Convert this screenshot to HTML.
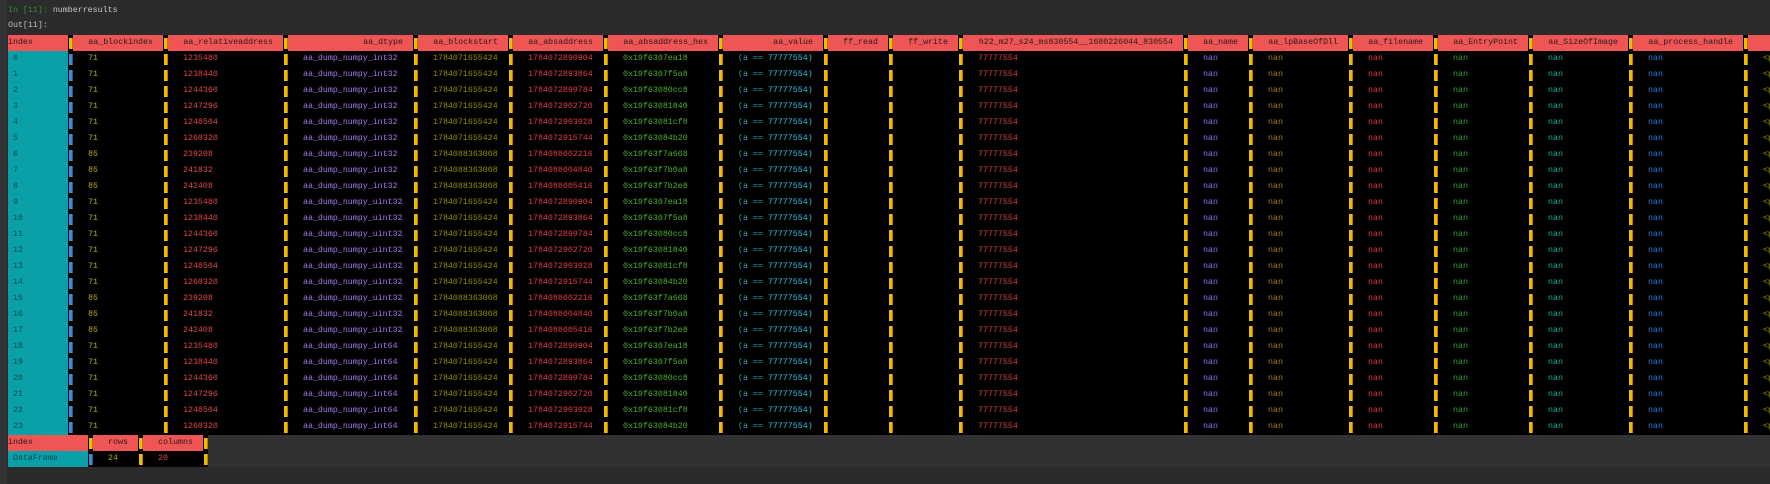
<!DOCTYPE html>
<html><head><meta charset="utf-8"><style>
*{margin:0;padding:0;box-sizing:border-box}
body{width:1770px;height:484px;background:#2b2b2b;overflow:hidden;position:relative;font-family:"Liberation Mono","DejaVu Sans Mono",monospace;font-size:8.3px}
#gut{position:absolute;left:0;top:0;width:7px;height:484px;background:#313335}
.ln{position:absolute;left:8px;white-space:pre;line-height:10px}
table{position:absolute;border-collapse:collapse;table-layout:fixed;background:#000}
td{height:16px;padding:0 0 0 15px;white-space:nowrap;overflow:hidden;line-height:16px}
tr.h td{background:#f05555;color:#2a1a1a;text-align:right;padding:0 10px 0 0}
tr.h td.i{text-align:left;padding:0}
td.i{background:#0aa0a8;color:#0a4a4a;padding-left:5px}
td.s{padding:0;background:#000 linear-gradient(to right,#000 1px,#e6c000 1px,#e6c000 4px,#d07000 4px,#d07000 5px,#000 5px) no-repeat 0 3px/100% 11px}
tr.h td.s{background:#000 linear-gradient(to right,#000 1px,#e6c000 1px,#e6c000 4px,#d07000 4px,#d07000 5px,#000 5px) no-repeat 0 3px/100% 11px;padding:0}
td.b{padding:0;background:#000 linear-gradient(to right,#000 1px,#3a8ed0 1px,#3a8ed0 4px,#1a5e90 4px,#1a5e90 5px,#000 5px) no-repeat 0 3px/100% 11px}
.c1{color:#b8a810}.c2{color:#e04848}.c3{color:#a878f0}.c4{color:#909000}.c5{color:#e03c48}.c6{color:#50b030}
.c7{color:#2aa8c0}.c7 b{font-weight:normal;color:#30c0e0}.c8{color:#d84040}
.n1{color:#8878ff}.n2{color:#a08010}.n3{color:#e03848}.n4{color:#30a030}.n5{color:#10b0a0}.n6{color:#2080e0}.n7{color:#a0a000}
#ft{position:absolute;left:208px;top:435px;width:1562px;height:32px;background:#313131}
</style></head><body>
<div id="gut"></div>
<div class="ln" style="top:6px"><span style="color:#3c8c3c">In [11]:</span> <span style="color:#c8c8c8">numberresults</span></div>
<div class="ln" style="top:21px;color:#c0c0c0">Out[11]:</div>
<table style="left:8px;top:35px;width:1770px">
<colgroup><col style="width:60px"><col style="width:5px"><col style="width:90px"><col style="width:5px"><col style="width:115px"><col style="width:5px"><col style="width:125px"><col style="width:5px"><col style="width:90px"><col style="width:5px"><col style="width:90px"><col style="width:5px"><col style="width:110px"><col style="width:5px"><col style="width:100px"><col style="width:5px"><col style="width:60px"><col style="width:5px"><col style="width:65px"><col style="width:5px"><col style="width:220px"><col style="width:5px"><col style="width:60px"><col style="width:5px"><col style="width:95px"><col style="width:5px"><col style="width:80px"><col style="width:5px"><col style="width:90px"><col style="width:5px"><col style="width:95px"><col style="width:5px"><col style="width:110px"><col style="width:5px"><col style="width:30px"></colgroup>
<tr class="h"><td class="i">index<td class="s"><td>aa_blockindex<td class="s"><td>aa_relativeaddress<td class="s"><td>aa_dtype<td class="s"><td>aa_blockstart<td class="s"><td>aa_absaddress<td class="s"><td>aa_absaddress_hex<td class="s"><td>aa_value<td class="s"><td>ff_read<td class="s"><td>ff_write<td class="s"><td>h22_m27_s24_ms830554__1680226044_830554<td class="s"><td>aa_name<td class="s"><td>aa_lpBaseOfDll<td class="s"><td>aa_filename<td class="s"><td>aa_EntryPoint<td class="s"><td>aa_SizeOfImage<td class="s"><td>aa_process_handle<td class="s"><td></td></tr>
<tr><td class="i">0<td class="b"><td class="c1">71<td class="s"><td class="c2">1235480<td class="s"><td class="c3">aa_dump_numpy_int32<td class="s"><td class="c4">1784071655424<td class="s"><td class="c5">1784072890904<td class="s"><td class="c6">0x19f6307ea18<td class="s"><td class="c7">(a == <b>77777554)</b><td class="s"><td><td class="s"><td><td class="s"><td class="c8">77777554<td class="s"><td class="n1">nan<td class="s"><td class="n2">nan<td class="s"><td class="n3">nan<td class="s"><td class="n4">nan<td class="s"><td class="n5">nan<td class="s"><td class="n6">nan<td class="s"><td class="n7">&lt;pandas</td></tr>
<tr><td class="i">1<td class="b"><td class="c1">71<td class="s"><td class="c2">1238440<td class="s"><td class="c3">aa_dump_numpy_int32<td class="s"><td class="c4">1784071655424<td class="s"><td class="c5">1784072893864<td class="s"><td class="c6">0x19f6307f5a8<td class="s"><td class="c7">(a == <b>77777554)</b><td class="s"><td><td class="s"><td><td class="s"><td class="c8">77777554<td class="s"><td class="n1">nan<td class="s"><td class="n2">nan<td class="s"><td class="n3">nan<td class="s"><td class="n4">nan<td class="s"><td class="n5">nan<td class="s"><td class="n6">nan<td class="s"><td class="n7">&lt;pandas</td></tr>
<tr><td class="i">2<td class="b"><td class="c1">71<td class="s"><td class="c2">1244360<td class="s"><td class="c3">aa_dump_numpy_int32<td class="s"><td class="c4">1784071655424<td class="s"><td class="c5">1784072899784<td class="s"><td class="c6">0x19f63080cc8<td class="s"><td class="c7">(a == <b>77777554)</b><td class="s"><td><td class="s"><td><td class="s"><td class="c8">77777554<td class="s"><td class="n1">nan<td class="s"><td class="n2">nan<td class="s"><td class="n3">nan<td class="s"><td class="n4">nan<td class="s"><td class="n5">nan<td class="s"><td class="n6">nan<td class="s"><td class="n7">&lt;pandas</td></tr>
<tr><td class="i">3<td class="b"><td class="c1">71<td class="s"><td class="c2">1247296<td class="s"><td class="c3">aa_dump_numpy_int32<td class="s"><td class="c4">1784071655424<td class="s"><td class="c5">1784072902720<td class="s"><td class="c6">0x19f63081840<td class="s"><td class="c7">(a == <b>77777554)</b><td class="s"><td><td class="s"><td><td class="s"><td class="c8">77777554<td class="s"><td class="n1">nan<td class="s"><td class="n2">nan<td class="s"><td class="n3">nan<td class="s"><td class="n4">nan<td class="s"><td class="n5">nan<td class="s"><td class="n6">nan<td class="s"><td class="n7">&lt;pandas</td></tr>
<tr><td class="i">4<td class="b"><td class="c1">71<td class="s"><td class="c2">1248504<td class="s"><td class="c3">aa_dump_numpy_int32<td class="s"><td class="c4">1784071655424<td class="s"><td class="c5">1784072903928<td class="s"><td class="c6">0x19f63081cf8<td class="s"><td class="c7">(a == <b>77777554)</b><td class="s"><td><td class="s"><td><td class="s"><td class="c8">77777554<td class="s"><td class="n1">nan<td class="s"><td class="n2">nan<td class="s"><td class="n3">nan<td class="s"><td class="n4">nan<td class="s"><td class="n5">nan<td class="s"><td class="n6">nan<td class="s"><td class="n7">&lt;pandas</td></tr>
<tr><td class="i">5<td class="b"><td class="c1">71<td class="s"><td class="c2">1260320<td class="s"><td class="c3">aa_dump_numpy_int32<td class="s"><td class="c4">1784071655424<td class="s"><td class="c5">1784072915744<td class="s"><td class="c6">0x19f63084b20<td class="s"><td class="c7">(a == <b>77777554)</b><td class="s"><td><td class="s"><td><td class="s"><td class="c8">77777554<td class="s"><td class="n1">nan<td class="s"><td class="n2">nan<td class="s"><td class="n3">nan<td class="s"><td class="n4">nan<td class="s"><td class="n5">nan<td class="s"><td class="n6">nan<td class="s"><td class="n7">&lt;pandas</td></tr>
<tr><td class="i">6<td class="b"><td class="c1">85<td class="s"><td class="c2">239208<td class="s"><td class="c3">aa_dump_numpy_int32<td class="s"><td class="c4">1784088363008<td class="s"><td class="c5">1784088602216<td class="s"><td class="c6">0x19f63f7a668<td class="s"><td class="c7">(a == <b>77777554)</b><td class="s"><td><td class="s"><td><td class="s"><td class="c8">77777554<td class="s"><td class="n1">nan<td class="s"><td class="n2">nan<td class="s"><td class="n3">nan<td class="s"><td class="n4">nan<td class="s"><td class="n5">nan<td class="s"><td class="n6">nan<td class="s"><td class="n7">&lt;pandas</td></tr>
<tr><td class="i">7<td class="b"><td class="c1">85<td class="s"><td class="c2">241832<td class="s"><td class="c3">aa_dump_numpy_int32<td class="s"><td class="c4">1784088363008<td class="s"><td class="c5">1784088604840<td class="s"><td class="c6">0x19f63f7b0a8<td class="s"><td class="c7">(a == <b>77777554)</b><td class="s"><td><td class="s"><td><td class="s"><td class="c8">77777554<td class="s"><td class="n1">nan<td class="s"><td class="n2">nan<td class="s"><td class="n3">nan<td class="s"><td class="n4">nan<td class="s"><td class="n5">nan<td class="s"><td class="n6">nan<td class="s"><td class="n7">&lt;pandas</td></tr>
<tr><td class="i">8<td class="b"><td class="c1">85<td class="s"><td class="c2">242408<td class="s"><td class="c3">aa_dump_numpy_int32<td class="s"><td class="c4">1784088363008<td class="s"><td class="c5">1784088605416<td class="s"><td class="c6">0x19f63f7b2e8<td class="s"><td class="c7">(a == <b>77777554)</b><td class="s"><td><td class="s"><td><td class="s"><td class="c8">77777554<td class="s"><td class="n1">nan<td class="s"><td class="n2">nan<td class="s"><td class="n3">nan<td class="s"><td class="n4">nan<td class="s"><td class="n5">nan<td class="s"><td class="n6">nan<td class="s"><td class="n7">&lt;pandas</td></tr>
<tr><td class="i">9<td class="b"><td class="c1">71<td class="s"><td class="c2">1235480<td class="s"><td class="c3">aa_dump_numpy_uint32<td class="s"><td class="c4">1784071655424<td class="s"><td class="c5">1784072890904<td class="s"><td class="c6">0x19f6307ea18<td class="s"><td class="c7">(a == <b>77777554)</b><td class="s"><td><td class="s"><td><td class="s"><td class="c8">77777554<td class="s"><td class="n1">nan<td class="s"><td class="n2">nan<td class="s"><td class="n3">nan<td class="s"><td class="n4">nan<td class="s"><td class="n5">nan<td class="s"><td class="n6">nan<td class="s"><td class="n7">&lt;pandas</td></tr>
<tr><td class="i">10<td class="b"><td class="c1">71<td class="s"><td class="c2">1238440<td class="s"><td class="c3">aa_dump_numpy_uint32<td class="s"><td class="c4">1784071655424<td class="s"><td class="c5">1784072893864<td class="s"><td class="c6">0x19f6307f5a8<td class="s"><td class="c7">(a == <b>77777554)</b><td class="s"><td><td class="s"><td><td class="s"><td class="c8">77777554<td class="s"><td class="n1">nan<td class="s"><td class="n2">nan<td class="s"><td class="n3">nan<td class="s"><td class="n4">nan<td class="s"><td class="n5">nan<td class="s"><td class="n6">nan<td class="s"><td class="n7">&lt;pandas</td></tr>
<tr><td class="i">11<td class="b"><td class="c1">71<td class="s"><td class="c2">1244360<td class="s"><td class="c3">aa_dump_numpy_uint32<td class="s"><td class="c4">1784071655424<td class="s"><td class="c5">1784072899784<td class="s"><td class="c6">0x19f63080cc8<td class="s"><td class="c7">(a == <b>77777554)</b><td class="s"><td><td class="s"><td><td class="s"><td class="c8">77777554<td class="s"><td class="n1">nan<td class="s"><td class="n2">nan<td class="s"><td class="n3">nan<td class="s"><td class="n4">nan<td class="s"><td class="n5">nan<td class="s"><td class="n6">nan<td class="s"><td class="n7">&lt;pandas</td></tr>
<tr><td class="i">12<td class="b"><td class="c1">71<td class="s"><td class="c2">1247296<td class="s"><td class="c3">aa_dump_numpy_uint32<td class="s"><td class="c4">1784071655424<td class="s"><td class="c5">1784072902720<td class="s"><td class="c6">0x19f63081840<td class="s"><td class="c7">(a == <b>77777554)</b><td class="s"><td><td class="s"><td><td class="s"><td class="c8">77777554<td class="s"><td class="n1">nan<td class="s"><td class="n2">nan<td class="s"><td class="n3">nan<td class="s"><td class="n4">nan<td class="s"><td class="n5">nan<td class="s"><td class="n6">nan<td class="s"><td class="n7">&lt;pandas</td></tr>
<tr><td class="i">13<td class="b"><td class="c1">71<td class="s"><td class="c2">1248504<td class="s"><td class="c3">aa_dump_numpy_uint32<td class="s"><td class="c4">1784071655424<td class="s"><td class="c5">1784072903928<td class="s"><td class="c6">0x19f63081cf8<td class="s"><td class="c7">(a == <b>77777554)</b><td class="s"><td><td class="s"><td><td class="s"><td class="c8">77777554<td class="s"><td class="n1">nan<td class="s"><td class="n2">nan<td class="s"><td class="n3">nan<td class="s"><td class="n4">nan<td class="s"><td class="n5">nan<td class="s"><td class="n6">nan<td class="s"><td class="n7">&lt;pandas</td></tr>
<tr><td class="i">14<td class="b"><td class="c1">71<td class="s"><td class="c2">1260320<td class="s"><td class="c3">aa_dump_numpy_uint32<td class="s"><td class="c4">1784071655424<td class="s"><td class="c5">1784072915744<td class="s"><td class="c6">0x19f63084b20<td class="s"><td class="c7">(a == <b>77777554)</b><td class="s"><td><td class="s"><td><td class="s"><td class="c8">77777554<td class="s"><td class="n1">nan<td class="s"><td class="n2">nan<td class="s"><td class="n3">nan<td class="s"><td class="n4">nan<td class="s"><td class="n5">nan<td class="s"><td class="n6">nan<td class="s"><td class="n7">&lt;pandas</td></tr>
<tr><td class="i">15<td class="b"><td class="c1">85<td class="s"><td class="c2">239208<td class="s"><td class="c3">aa_dump_numpy_uint32<td class="s"><td class="c4">1784088363008<td class="s"><td class="c5">1784088602216<td class="s"><td class="c6">0x19f63f7a668<td class="s"><td class="c7">(a == <b>77777554)</b><td class="s"><td><td class="s"><td><td class="s"><td class="c8">77777554<td class="s"><td class="n1">nan<td class="s"><td class="n2">nan<td class="s"><td class="n3">nan<td class="s"><td class="n4">nan<td class="s"><td class="n5">nan<td class="s"><td class="n6">nan<td class="s"><td class="n7">&lt;pandas</td></tr>
<tr><td class="i">16<td class="b"><td class="c1">85<td class="s"><td class="c2">241832<td class="s"><td class="c3">aa_dump_numpy_uint32<td class="s"><td class="c4">1784088363008<td class="s"><td class="c5">1784088604840<td class="s"><td class="c6">0x19f63f7b0a8<td class="s"><td class="c7">(a == <b>77777554)</b><td class="s"><td><td class="s"><td><td class="s"><td class="c8">77777554<td class="s"><td class="n1">nan<td class="s"><td class="n2">nan<td class="s"><td class="n3">nan<td class="s"><td class="n4">nan<td class="s"><td class="n5">nan<td class="s"><td class="n6">nan<td class="s"><td class="n7">&lt;pandas</td></tr>
<tr><td class="i">17<td class="b"><td class="c1">85<td class="s"><td class="c2">242408<td class="s"><td class="c3">aa_dump_numpy_uint32<td class="s"><td class="c4">1784088363008<td class="s"><td class="c5">1784088605416<td class="s"><td class="c6">0x19f63f7b2e8<td class="s"><td class="c7">(a == <b>77777554)</b><td class="s"><td><td class="s"><td><td class="s"><td class="c8">77777554<td class="s"><td class="n1">nan<td class="s"><td class="n2">nan<td class="s"><td class="n3">nan<td class="s"><td class="n4">nan<td class="s"><td class="n5">nan<td class="s"><td class="n6">nan<td class="s"><td class="n7">&lt;pandas</td></tr>
<tr><td class="i">18<td class="b"><td class="c1">71<td class="s"><td class="c2">1235480<td class="s"><td class="c3">aa_dump_numpy_int64<td class="s"><td class="c4">1784071655424<td class="s"><td class="c5">1784072890904<td class="s"><td class="c6">0x19f6307ea18<td class="s"><td class="c7">(a == <b>77777554)</b><td class="s"><td><td class="s"><td><td class="s"><td class="c8">77777554<td class="s"><td class="n1">nan<td class="s"><td class="n2">nan<td class="s"><td class="n3">nan<td class="s"><td class="n4">nan<td class="s"><td class="n5">nan<td class="s"><td class="n6">nan<td class="s"><td class="n7">&lt;pandas</td></tr>
<tr><td class="i">19<td class="b"><td class="c1">71<td class="s"><td class="c2">1238440<td class="s"><td class="c3">aa_dump_numpy_int64<td class="s"><td class="c4">1784071655424<td class="s"><td class="c5">1784072893864<td class="s"><td class="c6">0x19f6307f5a8<td class="s"><td class="c7">(a == <b>77777554)</b><td class="s"><td><td class="s"><td><td class="s"><td class="c8">77777554<td class="s"><td class="n1">nan<td class="s"><td class="n2">nan<td class="s"><td class="n3">nan<td class="s"><td class="n4">nan<td class="s"><td class="n5">nan<td class="s"><td class="n6">nan<td class="s"><td class="n7">&lt;pandas</td></tr>
<tr><td class="i">20<td class="b"><td class="c1">71<td class="s"><td class="c2">1244360<td class="s"><td class="c3">aa_dump_numpy_int64<td class="s"><td class="c4">1784071655424<td class="s"><td class="c5">1784072899784<td class="s"><td class="c6">0x19f63080cc8<td class="s"><td class="c7">(a == <b>77777554)</b><td class="s"><td><td class="s"><td><td class="s"><td class="c8">77777554<td class="s"><td class="n1">nan<td class="s"><td class="n2">nan<td class="s"><td class="n3">nan<td class="s"><td class="n4">nan<td class="s"><td class="n5">nan<td class="s"><td class="n6">nan<td class="s"><td class="n7">&lt;pandas</td></tr>
<tr><td class="i">21<td class="b"><td class="c1">71<td class="s"><td class="c2">1247296<td class="s"><td class="c3">aa_dump_numpy_int64<td class="s"><td class="c4">1784071655424<td class="s"><td class="c5">1784072902720<td class="s"><td class="c6">0x19f63081840<td class="s"><td class="c7">(a == <b>77777554)</b><td class="s"><td><td class="s"><td><td class="s"><td class="c8">77777554<td class="s"><td class="n1">nan<td class="s"><td class="n2">nan<td class="s"><td class="n3">nan<td class="s"><td class="n4">nan<td class="s"><td class="n5">nan<td class="s"><td class="n6">nan<td class="s"><td class="n7">&lt;pandas</td></tr>
<tr><td class="i">22<td class="b"><td class="c1">71<td class="s"><td class="c2">1248504<td class="s"><td class="c3">aa_dump_numpy_int64<td class="s"><td class="c4">1784071655424<td class="s"><td class="c5">1784072903928<td class="s"><td class="c6">0x19f63081cf8<td class="s"><td class="c7">(a == <b>77777554)</b><td class="s"><td><td class="s"><td><td class="s"><td class="c8">77777554<td class="s"><td class="n1">nan<td class="s"><td class="n2">nan<td class="s"><td class="n3">nan<td class="s"><td class="n4">nan<td class="s"><td class="n5">nan<td class="s"><td class="n6">nan<td class="s"><td class="n7">&lt;pandas</td></tr>
<tr><td class="i">23<td class="b"><td class="c1">71<td class="s"><td class="c2">1260320<td class="s"><td class="c3">aa_dump_numpy_int64<td class="s"><td class="c4">1784071655424<td class="s"><td class="c5">1784072915744<td class="s"><td class="c6">0x19f63084b20<td class="s"><td class="c7">(a == <b>77777554)</b><td class="s"><td><td class="s"><td><td class="s"><td class="c8">77777554<td class="s"><td class="n1">nan<td class="s"><td class="n2">nan<td class="s"><td class="n3">nan<td class="s"><td class="n4">nan<td class="s"><td class="n5">nan<td class="s"><td class="n6">nan<td class="s"><td class="n7">&lt;pandas</td></tr>
</table>
<div id="ft"></div>
<table style="left:8px;top:435px;width:200px">
<colgroup><col style="width:80px"><col style="width:5px"><col style="width:45px"><col style="width:5px"><col style="width:60px"><col style="width:5px"></colgroup>
<tr class="h"><td class="i">index<td class="s"><td>rows<td class="s"><td>columns<td class="s"></td></tr>
<tr><td class="i">DataFrame<td class="b"><td class="c1">24<td class="s"><td class="c2">20<td class="s"></td></tr>
</table>
</body></html>
